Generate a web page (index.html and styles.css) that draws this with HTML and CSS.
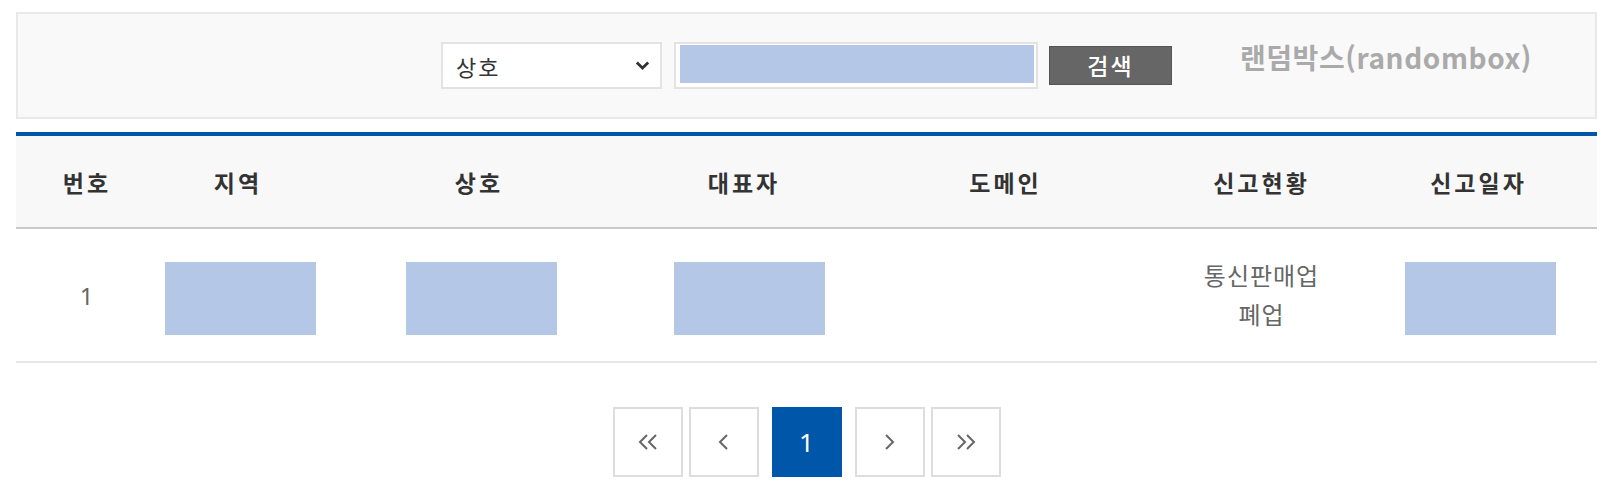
FILE: index.html
```html
<!DOCTYPE html>
<html lang="ko">
<head>
    <meta charset="UTF-8">
    <meta name="viewport" content="width=device-width, initial-scale=1.0">
    <title>통신판매업 신고현황</title>
    <link rel="stylesheet" href="styles.css">
</head>
<body>
    <div class="wrap">
        <div class="search">
            <form class="search-form">
                <div class="select-box">
                    <span>상호</span>
                    <svg class="caret" width="15" height="9" viewBox="0 0 15 9">
                        <polyline points="1.8,1.5 7.5,7 13.2,1.5" fill="none" stroke="#333" stroke-width="2.8"/>
                    </svg>
                </div>
                <div class="keyword"><div class="mask"></div></div>
                <button type="button" class="btn-search">검색</button>
            </form>
            <div class="brand">랜덤박스(randombox)</div>
        </div>

        <table class="list">
            <colgroup>
                <col style="width:142px">
                <col style="width:160px">
                <col style="width:322px">
                <col style="width:208px">
                <col style="width:315px">
                <col style="width:197px">
                <col>
            </colgroup>
            <thead>
                <tr>
                    <th>번호</th>
                    <th>지역</th>
                    <th>상호</th>
                    <th>대표자</th>
                    <th>도메인</th>
                    <th>신고현황</th>
                    <th>신고일자</th>
                </tr>
            </thead>
            <tbody>
                <tr>
                    <td>1</td>
                    <td><span class="mask"></span></td>
                    <td><span class="mask"></span></td>
                    <td><span class="mask shift"></span></td>
                    <td></td>
                    <td>통신판매업<br>폐업</td>
                    <td><span class="mask"></span></td>
                </tr>
            </tbody>
        </table>

        <div class="paging">
            <a class="page">
                <svg width="20" height="16" viewBox="0 0 20 16">
                    <polyline points="9,1 2,8 9,15" fill="none" stroke="#666" stroke-width="2"/>
                    <polyline points="18,1 11,8 18,15" fill="none" stroke="#666" stroke-width="2"/>
                </svg>
            </a>
            <a class="page">
                <svg width="11" height="16" viewBox="0 0 11 16">
                    <polyline points="9,1 2,8 9,15" fill="none" stroke="#666" stroke-width="2"/>
                </svg>
            </a>
            <a class="page num">1</a>
            <a class="page">
                <svg width="11" height="16" viewBox="0 0 11 16">
                    <polyline points="2,1 9,8 2,15" fill="none" stroke="#666" stroke-width="2"/>
                </svg>
            </a>
            <a class="page">
                <svg width="20" height="16" viewBox="0 0 20 16">
                    <polyline points="2,1 9,8 2,15" fill="none" stroke="#666" stroke-width="2"/>
                    <polyline points="11,1 18,8 11,15" fill="none" stroke="#666" stroke-width="2"/>
                </svg>
            </a>
        </div>
    </div>
</body>
</html>
```

FILE: styles.css
```css
body {
    margin: 0;
    padding: 0;
    background-color: #fff;
    font-family: "Noto Sans", "Noto Sans CJK KR", "Malgun Gothic", sans-serif;
    color: #333;
}

.wrap {
    margin: 12px 21px 0 16px;
}

/* search bar */
.search {
    display: grid;
    grid-template-columns: 1fr auto 1fr;
    align-items: center;
    height: 107px;
    box-sizing: border-box;
    border: 2px solid #e9e9e9;
    background-color: #f9f9f9;
}

.search-form {
    grid-column: 2;
    display: flex;
    align-items: center;
    margin: 0;
}

.select-box {
    display: flex;
    align-items: center;
    justify-content: space-between;
    width: 221px;
    height: 47px;
    box-sizing: border-box;
    padding: 0 10px 0 13px;
    border: 2px solid #e3e3e3;
    background-color: #fff;
    font-size: 22px;
    letter-spacing: 2px;
    color: #333;
}

.keyword {
    width: 364px;
    height: 47px;
    box-sizing: border-box;
    margin-left: 12px;
    padding: 1px 2px 4px 4px;
    border: 2px solid #e3e3e3;
    background-color: #fff;
}

.keyword .mask {
    width: 100%;
    height: 100%;
}

.mask {
    display: block;
    background-color: #b4c7e7;
}

.btn-search {
    width: 123px;
    height: 39px;
    margin-left: 11px;
    padding: 0;
    border: 1px solid #555;
    background-color: #666;
    color: #fff;
    font-family: "Noto Sans CJK KR", sans-serif;
    font-size: 23px;
    font-weight: 500;
    letter-spacing: 2px;
    line-height: 37px;
}

.brand {
    grid-column: 3;
    justify-self: end;
    align-self: start;
    margin: 23px 63px 0 0;
    font-family: "Noto Sans CJK KR", sans-serif;
    font-size: 28px;
    font-weight: bold;
    letter-spacing: 0.6px;
    line-height: 40px;
    color: #aaa;
}

/* list table */
.list {
    width: 100%;
    margin-top: 13px;
    border-collapse: collapse;
    table-layout: fixed;
    border-top: 4px solid #0056a8;
    text-align: center;
}

.list th {
    height: 91px;
    padding: 0;
    background-color: #f8f8f8;
    border-bottom: 2px solid #c9c9c9;
    font-size: 23px;
    font-weight: bold;
    letter-spacing: 3px;
    color: #333;
}

.list td {
    height: 132px;
    padding: 0;
    border-bottom: 2px solid #e6e6e6;
    font-size: 24px;
    letter-spacing: 1px;
    line-height: 39px;
    color: #666;
}

.list td .mask {
    width: 151px;
    height: 73px;
    margin: 6px auto 0;
    position: relative;
    left: 2px;
}

.list td .mask.shift {
    left: 5px;
}

/* paging */
.paging {
    display: flex;
    justify-content: center;
    gap: 6px;
    margin-top: 44px;
}

.page {
    display: flex;
    align-items: center;
    justify-content: center;
    width: 70px;
    height: 70px;
    box-sizing: border-box;
    border: 2px solid #ddd;
    background-color: #fff;
}

.page.num {
    margin: 0 7px;
    border-color: #0056a8;
    background-color: #0056a8;
    color: #fff;
    font-size: 26px;
}
```
